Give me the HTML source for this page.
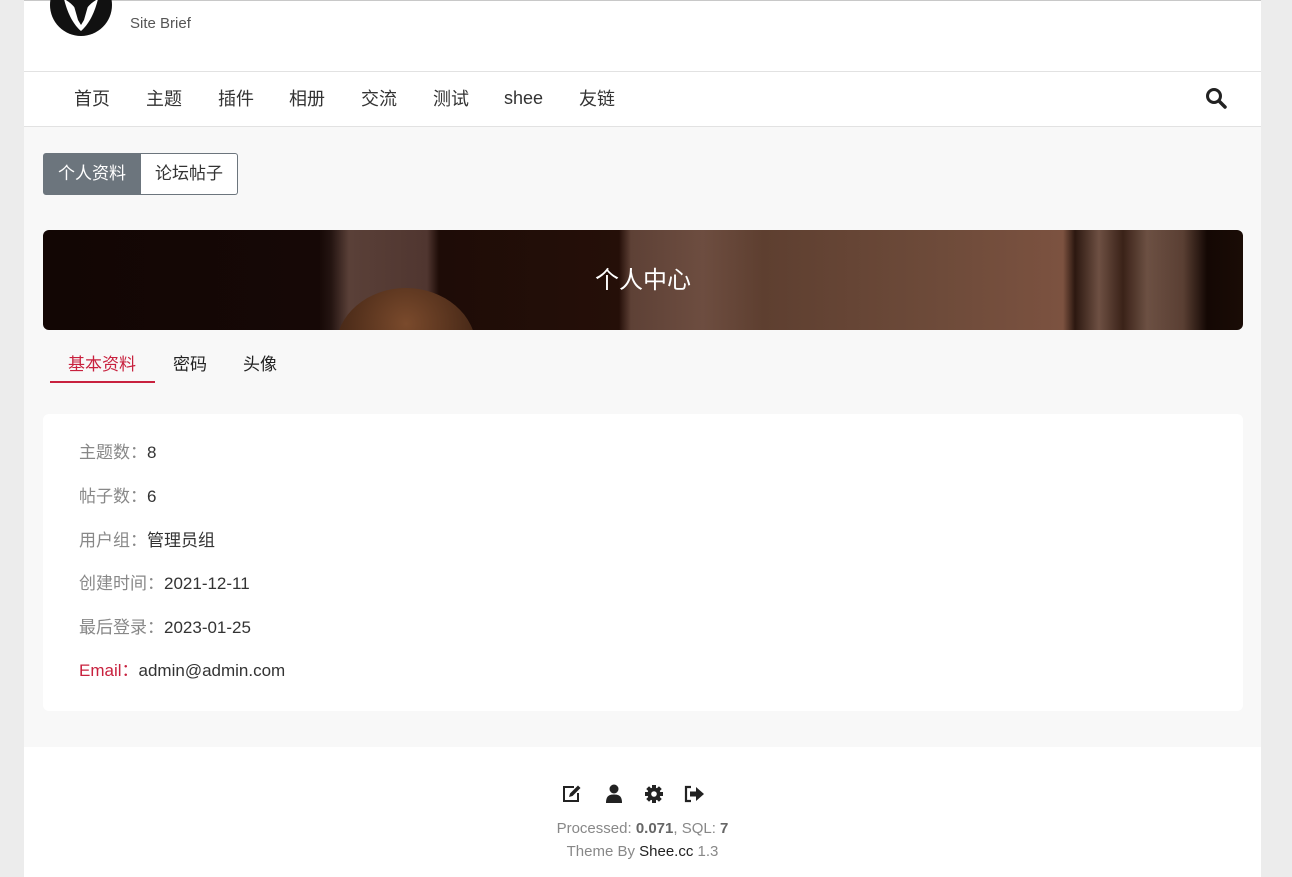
<!DOCTYPE html>
<html><head><meta charset="utf-8">
<style>
*{margin:0;padding:0;box-sizing:border-box}
body{width:1292px;height:877px;background:#ececec;font-family:"Liberation Sans","Noto Sans CJK SC",sans-serif;overflow:hidden;position:relative}
.wrap{position:absolute;left:24px;top:0;width:1237px;height:877px;background:#f8f8f8}
.top{position:absolute;left:0;top:0;width:1237px;height:72px;background:#fff;border-bottom:1px solid #e2e2e2;border-top:1px solid #c8c8c8}
.nav{position:absolute;left:0;top:72px;width:1237px;height:55px;background:#fff;border-bottom:1px solid #e2e2e2}
.nav a{position:absolute;top:13px;font-size:18px;color:#333;text-decoration:none}
.btns{position:absolute;left:19px;top:153px;height:42px;display:flex}
.btns div{height:42px;line-height:40px;font-size:17px;padding:0 14px;border:1px solid #6c757d}
.banner{position:absolute;left:19px;top:230px;width:1200px;height:100px;border-radius:6px;overflow:hidden;
background:linear-gradient(90deg,#120604 0,#160806 23%,#241411 24%,#5a4038 25.5%,#503630 32%,#1e0c07 33%,#250f08 48%,#5e4136 49%,#6d4d40 55%,#5e3f30 60%,#6e4b3a 75%,#7c5240 85%,#2c1810 86%,#6e5043 88%,#3a2218 90%,#6c5043 92%,#5a3f33 95%,#140804 97%,#1a0c06 100%)}
.head{position:absolute;left:293px;top:58px;width:140px;height:120px;border-radius:50%;background:radial-gradient(circle at 50% 30%,#7a4a2c,#4a2a18 60%,#2a1208)}
.banner span{position:absolute;left:0;width:100%;top:30px;text-align:center;color:#fff;font-size:24px}
.tabs a{position:absolute;top:350px;font-size:17px;color:#222}
.card{position:absolute;left:19px;top:414px;width:1200px;height:297px;background:#fff;border-radius:6px}
.card p{position:absolute;left:36px;font-size:17px;color:#333}
.card p b{font-weight:normal;color:#888}
.foot{position:absolute;left:0;top:747px;width:1237px;height:130px;background:#fff;text-align:center;color:#888;font-size:15px}
</style></head><body>
<div class="wrap">
 <div class="top">
  <svg style="position:absolute;left:26px;top:-28px" width="62" height="64" viewBox="0 0 62 64"><circle cx="31" cy="32" r="31" fill="#111"/><path d="M14 26 C22 30 27 36 31 46 C35 36 40 30 48 26 C44 42 38 52 31 58 C24 52 18 42 14 26Z" fill="#fff"/><path d="M24 33 L31 41 L38 33 L34 47 L31 52 L28 47Z" fill="#111"/></svg>
  <div style="position:absolute;left:106px;top:14px;font-size:15px;color:#555">Site Brief</div>
 </div>
 <div class="nav">
  <a style="left:50px">首页</a><a style="left:122px">主题</a><a style="left:194px">插件</a><a style="left:265px">相册</a><a style="left:337px">交流</a><a style="left:409px">测试</a><a style="left:480px;top:16px">shee</a><a style="left:555px">友链</a>
  <svg style="position:absolute;left:1181px;top:15px" width="22" height="22" viewBox="0 0 22 22"><circle cx="9" cy="9" r="6.5" fill="none" stroke="#222" stroke-width="3"/><path d="M14 14 L20 20" stroke="#222" stroke-width="3.5" stroke-linecap="round"/></svg>
 </div>
 <div class="btns"><div style="background:#6c757d;color:#fff;border-radius:3px 0 0 3px">个人资料</div><div style="background:#fff;color:#333;border-radius:0 3px 3px 0;border-left:none">论坛帖子</div></div>
 <div class="banner"><div class="head"></div><span>个人中心</span></div>
 <div class="tabs"><a style="left:44px;color:#c8213e">基本资料</a><a style="left:149px">密码</a><a style="left:219px">头像</a></div>
 <div style="position:absolute;left:26px;top:381px;width:105px;height:2px;background:#c8213e"></div>
 <div class="card">
  <p style="top:24px"><b>主题数：</b>8</p>
  <p style="top:68px"><b>帖子数：</b>6</p>
  <p style="top:112px"><b>用户组：</b>管理员组</p>
  <p style="top:155px"><b>创建时间：</b>2021-12-11</p>
  <p style="top:199px"><b>最后登录：</b>2023-01-25</p>
  <p style="top:242px"><b style="color:#c8213e">Email：</b>admin@admin.com</p>
 </div>
 <div class="foot">
  <svg style="position:absolute;left:537px;top:37px" width="22" height="20" viewBox="0 0 22 20"><path d="M13 3 H3 V17 H17 V9" fill="none" stroke="#222" stroke-width="2"/><path d="M8 13 L9 9.5 L17 1.5 L19.5 4 L11.5 12Z" fill="#222"/></svg>
  <svg style="position:absolute;left:581px;top:37px" width="18" height="20" viewBox="0 0 18 20"><circle cx="9" cy="5" r="4.5" fill="#222"/><path d="M1 19 C1 12 4 10.5 9 10.5 C14 10.5 17 12 17 19Z" fill="#222"/></svg>
  <svg style="position:absolute;left:620px;top:37px" width="20" height="20" viewBox="0 0 20 20"><g fill="#222"><circle cx="10" cy="10" r="6.5"/><rect x="8" y="1" width="4" height="18"/><rect x="1" y="8" width="18" height="4"/><rect x="8" y="1" width="4" height="18" transform="rotate(45 10 10)"/><rect x="8" y="1" width="4" height="18" transform="rotate(-45 10 10)"/></g><circle cx="10" cy="10" r="2.8" fill="#fff"/></svg>
  <svg style="position:absolute;left:660px;top:38px" width="22" height="18" viewBox="0 0 22 18"><path d="M7 2 H2 V16 H7" fill="none" stroke="#222" stroke-width="2.2"/><path d="M6 6.5 H12 V2 L20 9 L12 16 V11.5 H6Z" fill="#222"/></svg>
  <div style="position:absolute;top:73px;width:100%">Processed: <b style="color:#666">0.071</b>, SQL: <b style="color:#666">7</b></div>
  <div style="position:absolute;top:96px;width:100%">Theme By <span style="color:#222">Shee.cc</span> 1.3</div>
 </div>
</div>
</body></html>
